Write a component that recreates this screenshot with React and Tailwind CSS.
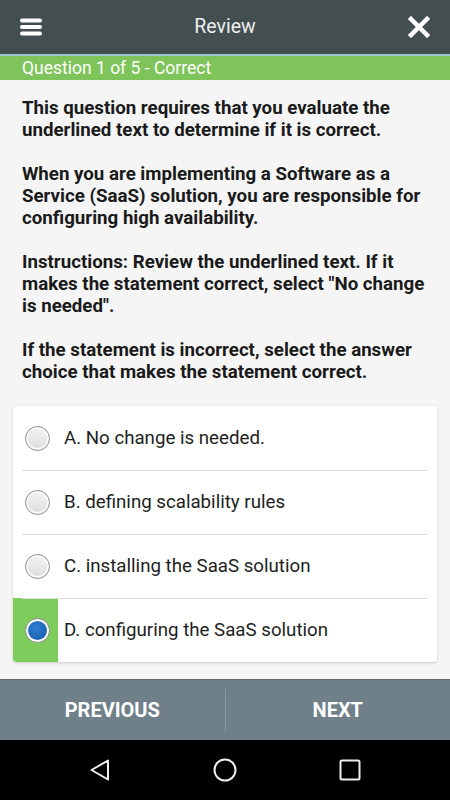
const OPTIONS = [
  { id: 'A', text: 'A. No change is needed.' },
  { id: 'B', text: 'B. defining scalability rules' },
  { id: 'C', text: 'C. installing the SaaS solution' },
  { id: 'D', text: 'D. configuring the SaaS solution', selected: true },
];

function Radio({ checked }) {
  if (checked) {
    return (
      <span className="flex h-[25px] w-[25px] items-center justify-center rounded-full border border-[#8a8a8a] bg-white">
        <span className="h-[19px] w-[19px] rounded-full bg-[radial-gradient(circle_at_40%_35%,#2f7fd0,#1358a8)]" />
      </span>
    );
  }
  return (
    <span className="h-[25px] w-[25px] rounded-full border border-[#8f8f8f] bg-[linear-gradient(180deg,#f4f4f4,#dcdcdc)] shadow-[inset_0_0_0_2px_#fafafa]" />
  );
}

export default function App() {
  return (
    <div className="flex h-[800px] w-[450px] flex-col bg-[#f5f5f5] font-['Roboto',sans-serif]">
      <header className="flex h-[56px] items-center justify-between border-b-2 border-[#9fc7cf] bg-[#434e51] px-[20px]">
        <svg width="22" height="18" viewBox="0 0 22 18">
          <rect x="0" y="0.5" width="22" height="4" rx="2" fill="#fff" />
          <rect x="0" y="7" width="22" height="4" rx="2" fill="#fff" />
          <rect x="0" y="13.5" width="22" height="4" rx="2" fill="#fff" />
        </svg>
        <h1 className="text-[19.5px] text-[#eef0f0]">Review</h1>
        <svg width="22" height="22" viewBox="0 0 22 22">
          <path d="M3 3L19 19M19 3L3 19" stroke="#fff" strokeWidth="4.5" strokeLinecap="square" />
        </svg>
      </header>
      <div className="flex h-[24px] items-center bg-[#7ec45a] px-[22px] text-[17.5px] text-white">
        Question 1 of 5 - Correct
      </div>

      <main className="flex-1 px-[13px] pt-[17px]">
        <div className="space-y-[22px] px-[9px] text-[18.7px] font-bold leading-[22px] text-[#1a1a1a]">
          <p>This question requires that you evaluate the underlined text to determine if it is correct.</p>
          <p>When you are implementing a Software as a Service (SaaS) solution, you are responsible for configuring high availability.</p>
          <p>Instructions: Review the underlined text. If it makes the statement correct, select "No change is needed".</p>
          <p>If the statement is incorrect, select the answer choice that makes the statement correct.</p>
        </div>

        <div className="mt-[23px] overflow-hidden rounded-[4px] bg-white shadow-[0_1px_3px_rgba(0,0,0,0.18)]">
          {OPTIONS.map((opt, i) => (
            <div key={opt.id} className="relative flex h-[64px] items-center">
              {opt.selected && <div className="absolute inset-y-0 left-0 w-[45px] bg-[#7ecd5c]" />}
              {i > 0 && <div className="absolute left-[9px] right-[9px] top-0 h-[1px] bg-[#dcdcdc]" />}
              <div className="relative flex w-[49px] justify-center">
                <Radio checked={opt.selected} />
              </div>
              <span className="ml-[2px] text-[18.7px] text-[#1e1e1e]">{opt.text}</span>
            </div>
          ))}
        </div>
      </main>

      <footer className="flex h-[61px] items-center border-t border-[#5d6b72] bg-[#6f8089] text-[20px] font-bold text-white">
        <button className="flex-1 text-center">PREVIOUS</button>
        <div className="h-[42px] w-[1px] bg-[#8a9aa2]" />
        <button className="flex-1 text-center">NEXT</button>
      </footer>

      <nav className="flex h-[60px] items-center justify-center gap-[102px] bg-black">
        <svg width="22" height="24" viewBox="0 0 22 24">
          <path d="M19 2.5L2.5 12L19 21.5Z" fill="none" stroke="#eee" strokeWidth="2" strokeLinejoin="round" />
        </svg>
        <svg width="24" height="24" viewBox="0 0 24 24">
          <circle cx="12" cy="12" r="10.5" fill="none" stroke="#eee" strokeWidth="2" />
        </svg>
        <svg width="22" height="22" viewBox="0 0 22 22">
          <rect x="1.5" y="1.5" width="19" height="19" rx="1.5" fill="none" stroke="#eee" strokeWidth="2" />
        </svg>
      </nav>
    </div>
  );
}
